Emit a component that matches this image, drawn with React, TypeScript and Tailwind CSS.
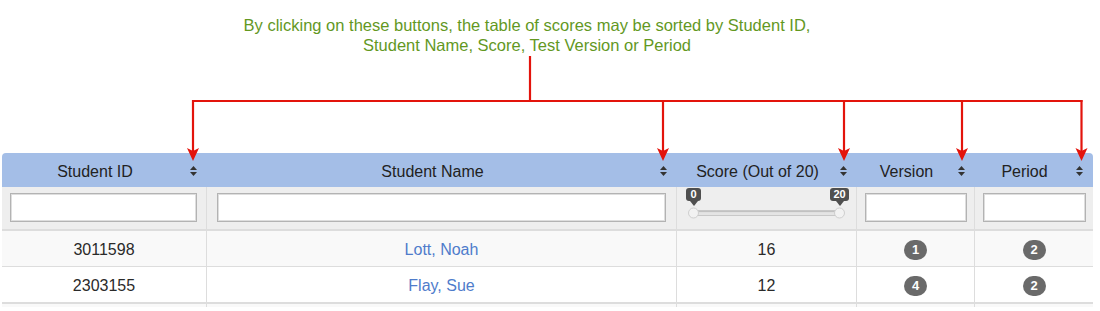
import React from "react";

const cols = "grid grid-cols-[205px_470px_180px_118px_118px]";

function SortIcon() {
  return (
    <svg width="7" height="10" viewBox="0 0 7 10" className="shrink-0">
      <polygon points="0,4 3.5,0 7,4" fill="#333" />
      <polygon points="0,6 3.5,10 7,6" fill="#333" />
    </svg>
  );
}

function HeadCell({ label }: { label: string }) {
  return (
    <div className="flex items-center h-full">
      <div className="flex-1 text-center pt-[3px]">{label}</div>
      <div className="ml-[2px] mr-[10px] flex items-center pt-[2px]">
        <SortIcon />
      </div>
    </div>
  );
}

function FilterInput() {
  return (
    <div className="h-[29px] w-full bg-white border border-[#b3b3b3] shadow-[inset_0_0_0_1px_#dedede]" />
  );
}

function Tip({ text }: { text: string }) {
  return (
    <div className="flex flex-col items-center">
      <div className="h-[13px] min-w-[15px] px-[3px] rounded-[3px] bg-[#4f4f4f] text-white text-[11px] leading-[13px] font-bold text-center">
        {text}
      </div>
      <div className="w-0 h-0 border-l-[4px] border-r-[4px] border-t-[5px] border-l-transparent border-r-transparent border-t-[#4f4f4f]" />
    </div>
  );
}

function Badge({ n }: { n: number }) {
  return (
    <span className="inline-flex items-center justify-center w-[23px] h-[20px] rounded-full bg-[#6a6a6a] text-white text-[13px] font-bold leading-none">
      {n}
    </span>
  );
}

const rows = [
  { id: "3011598", name: "Lott, Noah", score: 16, version: 1, period: 2, bg: "bg-[#f9f9f9]", border: "border-b border-[#dddddd]" },
  { id: "2303155", name: "Flay, Sue", score: 12, version: 4, period: 2, bg: "bg-white", border: "border-b-2 border-[#dddddd]" },
];

export default function App() {
  return (
    <div className="relative w-[1100px] h-[311px] overflow-hidden bg-white font-['Liberation_Sans',Arial,sans-serif]">
      <div className="h-[153px] pt-[15px]">
        <div className="w-[620px] ml-[217px] text-center text-[16.5px] leading-[20px] text-[#63981f]">
          By clicking on these buttons, the table of scores may be sorted by Student ID,
          <br />
          Student Name, Score, Test Version or Period
        </div>
      </div>

      <div className="ml-[2px] w-[1091px] text-[#2a2a2a] text-[16px]">
        <div className={`${cols} h-[34px] bg-[#a4bee7] rounded-t-[4px] text-[#222]`}>
          <HeadCell label="Student ID" />
          <HeadCell label="Student Name" />
          <HeadCell label="Score (Out of 20)" />
          <HeadCell label="Version" />
          <HeadCell label="Period" />
        </div>

        <div className={`${cols} h-[44px] bg-[#eeeeee] border-b-2 border-[#dddddd]`}>
          <div className="border-r border-[#dddddd] pl-[8px] pr-[9px] pt-[6px]">
            <FilterInput />
          </div>
          <div className="border-r border-[#dddddd] pl-[10px] pr-[10px] pt-[6px]">
            <FilterInput />
          </div>
          <div className="border-r border-[#dddddd] px-[15px] pt-[23px]">
            <div className="relative h-[6px] mx-[1px] rounded-full bg-[#e4e4e4] border border-[#c8c8c8] shadow-[inset_0_1px_1px_#bdbdbd]">
              <div className="absolute left-[-6px] top-1/2 -translate-y-1/2 w-[11px] h-[11px] rounded-full bg-[#f2f2f2] border border-[#cfcfcf]" />
              <div className="absolute right-[-6px] top-1/2 -translate-y-1/2 w-[11px] h-[11px] rounded-full bg-[#f2f2f2] border border-[#cfcfcf]" />
              <div className="absolute left-[-6px] top-[-23px] w-[11px] flex justify-center">
                <Tip text="0" />
              </div>
              <div className="absolute right-[-6px] top-[-23px] w-[11px] flex justify-center">
                <Tip text="20" />
              </div>
            </div>
          </div>
          <div className="border-r border-[#dddddd] pl-[8px] pr-[7px] pt-[6px]">
            <FilterInput />
          </div>
          <div className="pl-[8px] pr-[7px] pt-[6px]">
            <FilterInput />
          </div>
        </div>

        {rows.map((r) => (
          <div key={r.id} className={`${cols} ${r.bg} ${r.border}`}>
            <div className="h-[35px] pt-[3px] flex items-center justify-center border-r border-[#dddddd]">{r.id}</div>
            <div className="h-[35px] pt-[3px] flex items-center justify-center border-r border-[#dddddd] text-[#4f7ccb]">{r.name}</div>
            <div className="h-[35px] pt-[3px] flex items-center justify-center border-r border-[#dddddd]">{r.score}</div>
            <div className="h-[35px] pt-[2px] flex items-center justify-center border-r border-[#dddddd]">
              <Badge n={r.version} />
            </div>
            <div className="h-[35px] pt-[2px] flex items-center justify-center">
              <Badge n={r.period} />
            </div>
          </div>
        ))}
        <div className={`${cols} h-[3px] bg-[#f9f9f9]`}>
          <div className="border-r border-[#dddddd]" />
          <div className="border-r border-[#dddddd]" />
          <div className="border-r border-[#dddddd]" />
          <div className="border-r border-[#dddddd]" />
          <div />
        </div>
      </div>

      <svg
        className="absolute left-0 top-0 pointer-events-none"
        width="1100"
        height="311"
        viewBox="0 0 1100 311"
      >
        <g stroke="#e3140c" strokeWidth="2.2" fill="none">
          <line x1="530" y1="56" x2="530" y2="102" />
          <line x1="192" y1="101" x2="1082.5" y2="101" />
          {[193, 663, 844, 962, 1081.5].map((x) => (
            <line key={x} x1={x} y1="100" x2={x} y2="152" />
          ))}
        </g>
        <g fill="#e3140c">
          {[193, 663, 844, 962, 1081.5].map((x) => (
            <polygon key={x} points={`${x - 6},148 ${x},151 ${x + 6},148 ${x},161`} />
          ))}
        </g>
      </svg>
    </div>
  );
}
